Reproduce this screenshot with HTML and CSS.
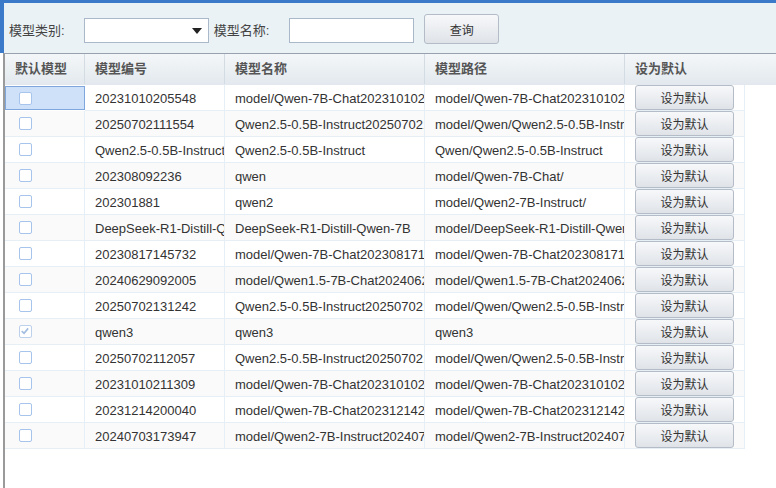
FILE: index.html
```html
<!DOCTYPE html>
<html lang="zh-CN">
<head>
    <meta charset="UTF-8">
    <title>模型管理</title>
    <link rel="stylesheet" href="styles.css">
</head>
<body>
    <div class="panel">
        <div class="toolbar">
            <label class="label first">模型类别:</label>
            <div class="combo"><span class="arrow"></span></div>
            <label class="label">模型名称:</label>
            <input type="text" class="text-input">
            <button class="btn query">查询</button>
        </div>
        <div class="grid">
            <div class="grid-head">
                <div class="cell c1">默认模型</div>
                <div class="cell c2">模型编号</div>
                <div class="cell c3">模型名称</div>
                <div class="cell c4">模型路径</div>
                <div class="cell c5">设为默认</div>
            </div>
            <div class="grid-body" id="rows"></div>
        </div>
    </div>

    <script>
        const rows = [
            ['20231010205548', 'model/Qwen-7B-Chat20231010205548', 'model/Qwen-7B-Chat20231010205548'],
            ['20250702111554', 'Qwen2.5-0.5B-Instruct20250702111554', 'model/Qwen/Qwen2.5-0.5B-Instruct'],
            ['Qwen2.5-0.5B-Instruct', 'Qwen2.5-0.5B-Instruct', 'Qwen/Qwen2.5-0.5B-Instruct'],
            ['202308092236', 'qwen', 'model/Qwen-7B-Chat/'],
            ['202301881', 'qwen2', 'model/Qwen2-7B-Instruct/'],
            ['DeepSeek-R1-Distill-Qwen-7B', 'DeepSeek-R1-Distill-Qwen-7B', 'model/DeepSeek-R1-Distill-Qwen-7B'],
            ['20230817145732', 'model/Qwen-7B-Chat20230817145732', 'model/Qwen-7B-Chat20230817145732'],
            ['20240629092005', 'model/Qwen1.5-7B-Chat20240629092005', 'model/Qwen1.5-7B-Chat20240629092005'],
            ['20250702131242', 'Qwen2.5-0.5B-Instruct20250702131242', 'model/Qwen/Qwen2.5-0.5B-Instruct'],
            ['qwen3', 'qwen3', 'qwen3'],
            ['20250702112057', 'Qwen2.5-0.5B-Instruct20250702112057', 'model/Qwen/Qwen2.5-0.5B-Instruct'],
            ['20231010211309', 'model/Qwen-7B-Chat20231010211309', 'model/Qwen-7B-Chat20231010211309'],
            ['20231214200040', 'model/Qwen-7B-Chat20231214200040', 'model/Qwen-7B-Chat20231214200040'],
            ['20240703173947', 'model/Qwen2-7B-Instruct20240703173947', 'model/Qwen2-7B-Instruct20240703173947']
        ];
        const defaultIndex = 9;
        const body = document.getElementById('rows');

        rows.forEach((r, i) => {
            const row = document.createElement('div');
            row.className = 'row' + (i % 2 === 1 ? ' alt' : '');
            const check = i === defaultIndex
                ? '<span class="check checked"><svg viewBox="0 0 13 13" width="11" height="11"><path d="M2 6 L4.8 8.6 L9.6 2.8" fill="none" stroke="#a3bde0" stroke-width="2"/></svg></span>'
                : '<span class="check"></span>';
            row.innerHTML = `
                <div class="cell c1${i === 0 ? ' focus' : ''}">${check}</div>
                <div class="cell c2">${r[0]}</div>
                <div class="cell c3">${r[1]}</div>
                <div class="cell c4">${r[2]}</div>
                <div class="cell c5"><button class="btn set">设为默认</button></div>`;
            body.appendChild(row);
        });
    </script>
</body>
</html>
```

FILE: styles.css
```css
body {
    margin: 0;
    font-family: "Liberation Sans", "Noto Sans CJK SC", sans-serif;
    font-size: 13px;
    color: #333;
    background: #fff;
}
.panel {
    height: 488px;
    border-top: 3px solid #3b79c9;
    box-sizing: border-box;
    display: flex;
    flex-direction: column;
}
.toolbar {
    height: 50px;
    flex: none;
    border-left: 4px solid #3b79c9;
    background: #ebf2f6;
    display: flex;
    align-items: flex-end;
    box-sizing: border-box;
    padding: 0 0 10px 5px;
}
.label {
    color: #444;
    line-height: 25px;
    margin-right: 20px;
}
.label.first {
    margin-right: 19px;
}
.combo {
    width: 123px;
    height: 23px;
    background: #fff;
    border: 1px solid #a9b9c9;
    position: relative;
    margin-right: 5px;
}
.arrow {
    position: absolute;
    right: 6px;
    top: 9px;
    border-left: 5px solid transparent;
    border-right: 5px solid transparent;
    border-top: 6px solid #222;
}
.text-input {
    box-sizing: border-box;
    border: 1px solid #a9b9c9;
    margin: 0 10px 0 0;
    padding: 0 4px;
    width: 125px;
    height: 25px;
}
.btn {
    font-family: "Liberation Sans", "Noto Sans CJK SC", sans-serif;
    font-size: 12px;
    color: #333;
    border: 1px solid #b3bcc7;
    border-radius: 3px;
    background: linear-gradient(#f7f8fa, #dfe3e8);
    cursor: pointer;
    padding: 0;
}
.query {
    width: 75px;
    height: 30px;
    margin-bottom: -1px;
}
.grid {
    flex: 1;
    border-top: 1px solid #98a2ac;
    border-left: 2px solid #9a9a9a;
    margin-left: 3px;
    overflow: hidden;
}
.grid-head {
    display: flex;
    height: 30px;
    background: linear-gradient(#f4f7f9, #e3e9ee);
    border-bottom: 1px solid #e2e8ee;
}
.grid-head .cell {
    color: #555;
    font-weight: bold;
    line-height: 30px;
    border-right: 1px solid #d3dbe3;
}
.grid-head .c5 {
    flex: 1;
    border-right: none;
}
.cell {
    box-sizing: border-box;
    padding-left: 10px;
    white-space: nowrap;
    overflow: hidden;
    flex: none;
}
.c1 { width: 80px; }
.c2 { width: 140px; }
.c3 { width: 200px; }
.c4 { width: 200px; }
.c5 { width: 120px; }
.row {
    display: flex;
    height: 26px;
    width: 740px;
}
.row.alt {
    background: #fafafa;
}
.row .cell {
    line-height: 27px;
    border-right: 1px solid #e6eef6;
    border-bottom: 1px solid #e6eef6;
}
.row .c1 {
    display: flex;
    align-items: center;
    padding-left: 14px;
}
.row .c1.focus {
    background: #cfe1f9;
    border: 1px solid #7fa7dd;
    padding-left: 13px;
    margin: 1px 0 0 0;
    height: 24px;
}
.check {
    width: 13px;
    height: 13px;
    box-sizing: border-box;
    border: 1px solid #a6c4ec;
    border-radius: 2px;
    background: #fff;
    display: flex;
    align-items: center;
    justify-content: center;
}
.check.checked {
    border-color: #bdd1ec;
}
.row .c5 {
    padding-left: 10px;
    display: flex;
    align-items: center;
}
.set {
    width: 99px;
    height: 25px;
}
```
